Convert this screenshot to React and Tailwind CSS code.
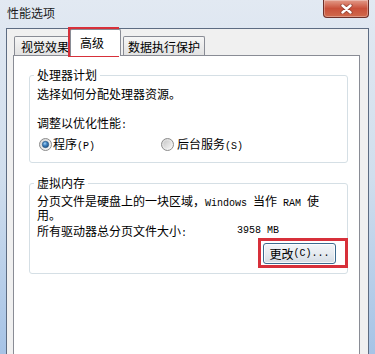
import React from "react";

// SimSun-like half-width latin: 6px per char
const mono = "font-['Liberation_Mono',monospace] text-[10px] leading-[8px]";

function CloseButton() {
  return (
    <div className="flex h-[18px] w-[46px] items-center justify-center rounded-b-[4px] border border-t-0 border-[#6d3029] bg-linear-to-b from-[#e29a89] via-[#c9503a] to-[#d06a4c] shadow-[inset_0_0_0_1px_rgba(255,255,255,0.3)]">
      <svg width="13" height="10" viewBox="0 0 13 10">
        <path d="M2.5 1.5 L10.5 8.5 M10.5 1.5 L2.5 8.5" stroke="#5a211b" strokeWidth="4.2" strokeLinecap="round" opacity="0.45" fill="none" />
        <path d="M2.5 1.5 L10.5 8.5 M10.5 1.5 L2.5 8.5" stroke="#ffffff" strokeWidth="2.4" strokeLinecap="round" fill="none" />
      </svg>
    </div>
  );
}

function Radio({ checked }) {
  return (
    <svg width="13" height="13" viewBox="0 0 13 13" className="block shrink-0">
      <defs>
        <linearGradient id="ring" x1="0" y1="0" x2="1" y2="1">
          <stop offset="0" stopColor="#d4d4d4" />
          <stop offset="1" stopColor="#fbfbfb" />
        </linearGradient>
        <linearGradient id="well" x1="0" y1="0" x2="1" y2="1">
          <stop offset="0" stopColor="#c9c9c9" />
          <stop offset="1" stopColor="#f4f4f4" />
        </linearGradient>
        <radialGradient id="dot" cx="0.4" cy="0.35" r="0.7">
          <stop offset="0" stopColor="#a6d4f5" />
          <stop offset="0.45" stopColor="#3f82c2" />
          <stop offset="1" stopColor="#1c4d7c" />
        </radialGradient>
      </defs>
      <circle cx="6.5" cy="6.5" r="6" fill="url(#ring)" stroke="#8c8c8c" strokeWidth="1" />
      {checked ? (
        <circle cx="6.5" cy="6.5" r="3.2" fill="url(#dot)" stroke="#24527f" strokeWidth="0.6" />
      ) : (
        <circle cx="6.5" cy="6.5" r="4" fill="url(#well)" />
      )}
    </svg>
  );
}

export default function App() {
  return (
    <div className="relative flex h-[354px] w-[375px] flex-col overflow-hidden bg-linear-to-b from-[#e2e9f2] via-[#d0deed] to-[#a6c3e6] font-['Noto_Sans_CJK_SC',sans-serif] text-[12px] leading-[14px] text-black">
      {/* Title bar */}
      <div className="flex h-[28px] shrink-0 items-start justify-between pl-[7px] pr-[6px]">
        <span className="pt-[6px] text-[#1a1a1a]">性能选项</span>
        <CloseButton />
      </div>

      {/* Dialog client area */}
      <div className="mx-[6px] flex flex-1 flex-col border-x border-t border-[#5d6c82] bg-[#f0f0f0] pl-[6px] pr-[8px]">
        {/* Tabs */}
        <div className="flex h-[26px] shrink-0 items-end">
          <div className="ml-[1px] h-[19px] w-[57px] rounded-t-[2px] border-x border-t border-[#898c95] bg-linear-to-b from-[#f6f6f6] to-[#e2e2e2] pl-[6px] pt-[3px]">
            视觉效果
          </div>
          <div className="relative z-10 -mb-px -ml-px h-[27px] w-[51px] rounded-t-[2px] border-x border-t border-[#898c95] bg-white pl-[9px] pt-[6px]">
            高级
          </div>
          <div className="ml-[2px] h-[19px] w-[82px] rounded-t-[2px] border-x border-t border-[#898c95] bg-linear-to-b from-[#f6f6f6] to-[#e2e2e2] pt-[3px] text-center">
            数据执行保护
          </div>
        </div>

        {/* Tab panel */}
        <div className="flex-1 border-x border-t border-[#898c95] bg-white pl-[15px] pr-[11px] pt-[12px]">
          <fieldset className="rounded-[3px] border border-[#d5dfe5] px-[7px] pb-[11px]">
            <legend className="-ml-[3px] h-[14px] px-[3px]">处理器计划</legend>
            <div className="mt-[5px] h-[14px]">选择如何分配处理器资源。</div>
            <div className="mt-[15px] h-[14px]">
              调整以优化性能<span className={mono}>:</span>
            </div>
            <div className="mt-[7px] flex h-[14px] items-center">
              <div className="ml-[2px] flex w-[122px] items-center gap-[1px]">
                <Radio checked />
                <span className="h-[14px]">
                  程序<span className={mono}>(P)</span>
                </span>
              </div>
              <div className="flex items-center gap-[3px]">
                <Radio />
                <span className="h-[14px]">
                  后台服务<span className={mono}>(S)</span>
                </span>
              </div>
            </div>
          </fieldset>

          <fieldset className="mt-[13px] rounded-[3px] border border-[#d5dfe5] px-[7px] pb-[9px]">
            <legend className="-ml-[3px] h-[14px] px-[3px]">虚拟内存</legend>
            <div className="mt-[4px] h-[13px] whitespace-nowrap leading-[13px]">
              分页文件是硬盘上的一块区域，<span className={mono}>Windows </span>当作<span className={mono}> RAM </span>使
            </div>
            <div className="mt-[1px] h-[13px] whitespace-nowrap leading-[13px]">用。</div>
            <div className="mt-[3px] flex h-[13px] whitespace-nowrap leading-[13px]">
              <span className="w-[200px]">
                所有驱动器总分页文件大小<span className={mono}>:</span>
              </span>
              <span className={mono + " pt-[3px]"}>3958 MB</span>
            </div>
            <div className="mt-[6px] flex justify-end pr-[4px]">
              <button className="flex h-[21px] w-[73px] items-center justify-center whitespace-nowrap rounded-[3px] border border-[#3c6a8e] bg-linear-to-b from-[#f3f6f9] via-[#e6ebf0] to-[#d5dde5] leading-[14px] shadow-[inset_0_0_0_1px_rgba(255,255,255,0.8)]">
                更改<span className={mono}>(C)...</span>
              </button>
            </div>
          </fieldset>
        </div>
      </div>

      {/* Red annotation boxes */}
      <div className="pointer-events-none absolute left-[68px] top-[27px] h-[30px] w-[51px] border-[3px] border-[#d7303a]" />
      <div className="pointer-events-none absolute left-[258px] top-[238px] h-[30px] w-[90px] border-[3px] border-[#d7303a]" />
    </div>
  );
}
